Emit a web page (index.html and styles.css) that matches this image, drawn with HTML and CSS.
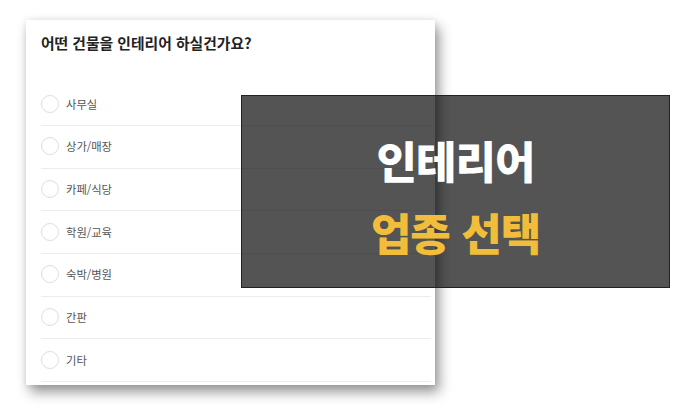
FILE: index.html
```html
<!DOCTYPE html>
<html lang="ko">
<head>
<meta charset="utf-8">
<link rel="stylesheet" href="styles.css">
</head>
<body>
<div class="page">
  <div class="card">
    <h1 class="title">어떤 건물을 인테리어 하실건가요?</h1>
    <ul class="options">
      <li class="option"><span class="radio"></span><span class="label">사무실</span></li>
      <li class="option"><span class="radio"></span><span class="label">상가/매장</span></li>
      <li class="option"><span class="radio"></span><span class="label">카페/식당</span></li>
      <li class="option"><span class="radio"></span><span class="label">학원/교육</span></li>
      <li class="option"><span class="radio"></span><span class="label">숙박/병원</span></li>
      <li class="option"><span class="radio"></span><span class="label">간판</span></li>
      <li class="option"><span class="radio"></span><span class="label">기타</span></li>
    </ul>
  </div>
  <div class="banner">
    <div class="banner-line main">인테리어</div>
    <div class="banner-line accent">업종 선택</div>
  </div>
</div>
</body>
</html>
```
FILE: styles.css
```css
html, body {
  margin: 0;
  padding: 0;
  background: #ffffff;
}
body {
  font-family: "Noto Sans CJK KR", "Noto Sans", sans-serif;
}
.page {
  position: relative;
  width: 692px;
  height: 412px;
  overflow: hidden;
  padding: 20px 0 0 26px;
  box-sizing: border-box;
}
.card {
  width: 409px;
  background: #fff;
  box-sizing: border-box;
  padding: 0 4px 3px 15px;
  box-shadow: 4px 7px 12px rgba(0, 0, 0, 0.42), 0 0 6px rgba(0, 0, 0, 0.08);
}
.title {
  margin: 0;
  height: 63.3px;
  box-sizing: border-box;
  padding-top: 13px;
  font-size: 14.8px;
  line-height: 20px;
  font-weight: 700;
  color: #222;
}
.options {
  list-style: none;
  margin: 0;
  padding: 0;
}
.option {
  display: flex;
  align-items: center;
  gap: 7px;
  height: 42.67px;
  box-sizing: border-box;
  border-bottom: 1px solid #ececec;
  padding-bottom: 1px;
}
.radio {
  width: 18px;
  height: 18px;
  border: 1px solid #dedede;
  border-radius: 50%;
  box-sizing: border-box;
  flex: none;
}
.label {
  font-size: 11.3px;
  line-height: 16px;
  color: #555;
}
.banner {
  position: absolute;
  left: 241px;
  top: 95px;
  width: 429px;
  height: 193px;
  box-sizing: border-box;
  border: 1px solid #222;
  background: rgba(0, 0, 0, 0.67);
  display: flex;
  flex-direction: column;
  align-items: center;
  justify-content: center;
  gap: 14px;
  padding-top: 8px;
}
.banner-line {
  font-size: 44px;
  line-height: 58px;
  font-weight: 900;
  letter-spacing: -1px;
}
.main {
  color: #ffffff;
}
.accent {
  color: #f2bd3a;
}
```
